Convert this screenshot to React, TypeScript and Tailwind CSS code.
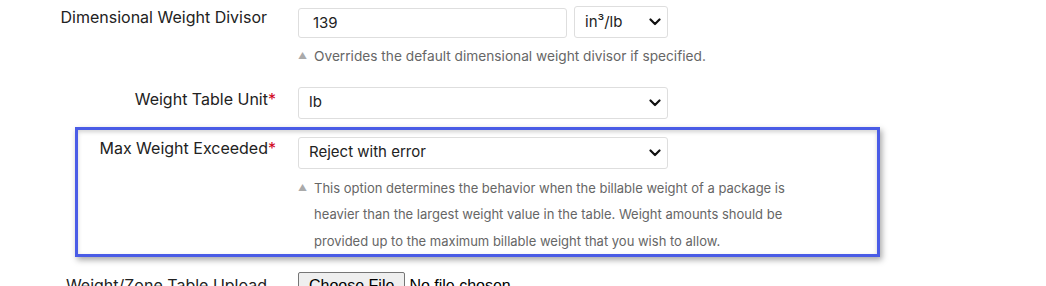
import React from "react";

const Chevron = () => (
  <svg
    className="pointer-events-none absolute right-[6px] top-1/2 -translate-y-1/2"
    width="12"
    height="8"
    viewBox="0 0 12 8"
    fill="none"
  >
    <path d="M1.5 1.5 L6 6 L10.5 1.5" stroke="#111" strokeWidth="2.2" strokeLinecap="round" strokeLinejoin="round" />
  </svg>
);

const Select = ({ value, w }: { value: string; w: string }) => (
  <div className={`relative ${w} h-[32px] rounded-[3px] border border-[#dedede] bg-white`}>
    <div className="flex h-full items-center pl-[10px] text-[15px] text-[#222]">{value}</div>
    <Chevron />
  </div>
);

const Help = ({ lines, size }: { lines: string[]; size: string }) => (
  <div className={`flex ${size} leading-[26.5px] text-[#666]`}>
    <span className="w-[16px] shrink-0 text-[9px] text-[#aaa]">▲</span>
    <div>
      {lines.map((l, i) => (
        <div key={i} className="whitespace-nowrap">
          {l}
        </div>
      ))}
    </div>
  </div>
);

const Req = () => <span className="text-[#d0021b]">*</span>;

export default function App() {
  return (
    <div
      className="h-[286px] w-[1046px] overflow-hidden bg-white text-[#222]"
      style={{ fontFamily: "Inter, 'Noto Sans', sans-serif" }}
    >
      {/* Row 1 */}
      <div className="flex pt-[6px]">
        <div className="w-[276px] shrink-0 pr-[9px] text-right text-[16px] leading-[22px]">
          Dimensional Weight Divisor
        </div>
        <div className="ml-[22px]">
          <div className="flex items-end gap-[7px]">
            <div className="flex h-[30px] w-[269px] items-center rounded-[3px] border border-[#dedede] pl-[14px] text-[15px]">
              139
            </div>
            <Select value="in³/lb" w="w-[94px]" />
          </div>
          <div className="mt-[5px]">
            <Help size="text-[13.7px]" lines={["Overrides the default dimensional weight divisor if specified."]} />
          </div>
        </div>
      </div>

      {/* Row 2 */}
      <div className="mt-[17px] flex">
        <div className="w-[276px] shrink-0 pt-[1px] text-right text-[16px] leading-[22px]">
          Weight Table Unit<Req />
        </div>
        <div className="ml-[22px]">
          <Select value="lb" w="w-[370px]" />
        </div>
      </div>

      {/* Row 3 boxed */}
      <div className="ml-[75px] mt-[8px] w-[805px] border-[3px] border-[#4a5ce6] shadow-[2px_3px_6px_rgba(0,0,0,0.35),inset_0_2px_4px_rgba(0,0,0,0.18)]">
        <div className="flex pt-[7px]">
          <div className="w-[198px] shrink-0 text-right text-[16px] leading-[22px]">
            Max Weight Exceeded<Req />
          </div>
          <div className="ml-[22px]">
            <Select value="Reject with error" w="w-[370px]" />
            <div className="mt-[6px]">
              <Help
                size="text-[13px]"
                lines={[
                  "This option determines the behavior when the billable weight of a package is",
                  "heavier than the largest weight value in the table. Weight amounts should be",
                  "provided up to the maximum billable weight that you wish to allow.",
                ]}
              />
            </div>
          </div>
        </div>
      </div>

      {/* Row 4 */}
      <div className="mt-[15px] flex">
        <div className="w-[276px] shrink-0 pr-[9px] pt-[2px] text-right text-[16px] leading-[22px]">
          Weight/Zone Table Upload
        </div>
        <div className="ml-[22px] flex items-center">
          <span
            className="rounded-[2px] border border-[#767676] bg-[#efefef] px-[10px] py-[1px] text-[16px] text-black"
            style={{ fontFamily: "'Liberation Sans', Arial, sans-serif" }}
          >
            Choose File
          </span>
          <span
            className="ml-[4px] text-[16px] text-black"
            style={{ fontFamily: "'Liberation Sans', Arial, sans-serif" }}
          >
            No file chosen
          </span>
        </div>
      </div>
    </div>
  );
}
